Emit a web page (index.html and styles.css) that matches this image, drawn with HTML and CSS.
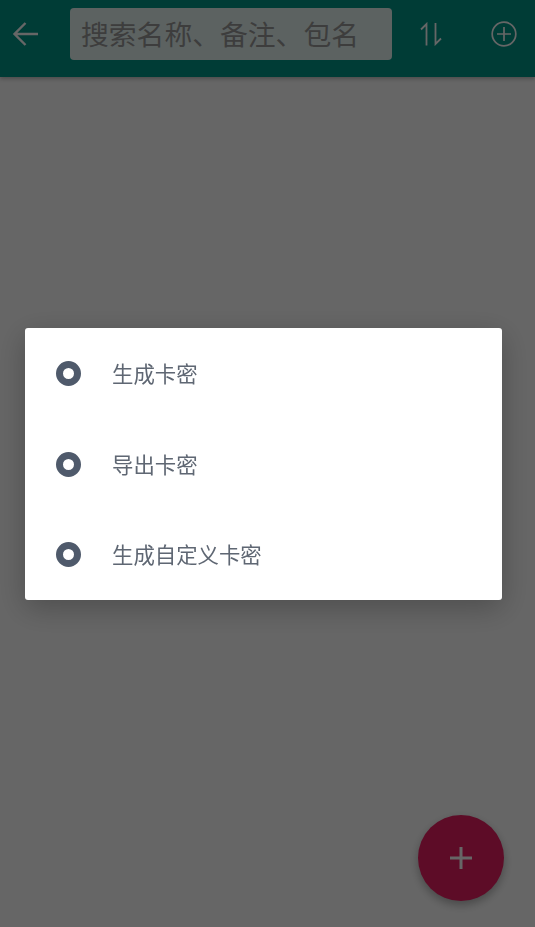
FILE: index.html
```html
<!DOCTYPE html>
<html lang="zh">
<head>
<meta charset="utf-8">
<title>卡密</title>
<link rel="stylesheet" href="styles.css">
</head>
<body>
<header class="appbar">
  <button class="icon-btn back" aria-label="返回">
    <svg width="28" height="28" viewBox="0 0 28 28" fill="none" stroke="currentColor" stroke-width="2.4"><path d="M26 14H3M13.500 3 2.500 14l11 11"/></svg>
  </button>
  <input class="search" type="text" placeholder="搜索名称、备注、包名">
  <button class="icon-btn sort" aria-label="排序">
    <svg width="22" height="24" viewBox="0 0 22 24" fill="none" stroke="currentColor" stroke-width="1.800"><path d="M6.500 23.500V2L1 7.500M15.500 1v21l5.500-5.500"/></svg>
  </button>
  <button class="icon-btn add" aria-label="添加">
    <svg width="26" height="26" viewBox="0 0 26 26" fill="none" stroke="currentColor" stroke-width="1.700"><circle cx="13" cy="13" r="11.800"/><path d="M13 6v14M6 13h14"/></svg>
  </button>
</header>
<button class="fab" aria-label="新建">
  <svg width="22" height="22" viewBox="0 0 22 22" fill="none" stroke="currentColor" stroke-width="3"><path d="M11 0v22M0 11h22"/></svg>
</button>
<div class="overlay">
  <div class="dialog">
    <div class="option"><span class="radio"></span><span class="label">生成卡密</span></div>
    <div class="option"><span class="radio"></span><span class="label">导出卡密</span></div>
    <div class="option"><span class="radio"></span><span class="label">生成自定义卡密</span></div>
  </div>
</div>
</body>
</html>
```
FILE: styles.css
```css
* { box-sizing: border-box; }
html, body { height: 100%; }
body {
  margin: 0;
  height: 927px;
  overflow: hidden;
  background: #fff;
  font-family: "Roboto", "Noto Sans CJK SC", sans-serif;
}
.appbar {
  height: 77px;
  background: #009688;
  display: flex;
  align-items: flex-start;
  padding: 8px 0 0 0;
  box-shadow: 0 2px 4px rgba(0,0,0,.25);
}
.icon-btn {
  flex: none;
  border: 0;
  padding: 0;
  background: none;
  color: #fff;
  display: flex;
  align-items: center;
  justify-content: center;
  height: 52px;
}
.back { width: 70px; padding-right: 19px; }
.search {
  flex: none;
  width: 322px;
  height: 52px;
  border: 0;
  border-radius: 4px;
  background: rgba(255,255,255,.9);
  padding: 0 11px 2px;
  font: 27.800px "Noto Sans CJK SC", sans-serif;
  outline: none;
}
.search::placeholder { color: #999; opacity: 1; }
.sort { width: 78px; }
.add { width: 65px; padding-left: 3px; }
.fab {
  position: fixed;
  left: 418px;
  top: 815px;
  width: 86px;
  height: 86px;
  border: 0;
  border-radius: 50%;
  background: #e91e63;
  color: #fff;
  display: flex;
  align-items: center;
  justify-content: center;
  box-shadow: 0 4px 10px rgba(0,0,0,.3);
}
.overlay {
  position: fixed;
  inset: 0;
  background: rgba(0,0,0,.6);
}
.dialog {
  position: absolute;
  left: 25px;
  top: 328px;
  width: 477px;
  height: 272px;
  background: #fff;
  border-radius: 3px;
  box-shadow: 0 8px 30px rgba(0,0,0,.25);
  display: flex;
  flex-direction: column;
}
.option {
  flex: 1;
  display: flex;
  align-items: center;
  padding-left: 31px;
}
.radio {
  width: 25px;
  height: 25px;
  border-radius: 50%;
  border: 7.500px solid #4f5a6b;
  background: #fff;
}
.label {
  margin-left: 31px;
  margin-bottom: 2px;
  font-size: 21.400px;
  color: #5f6773;
}
```
